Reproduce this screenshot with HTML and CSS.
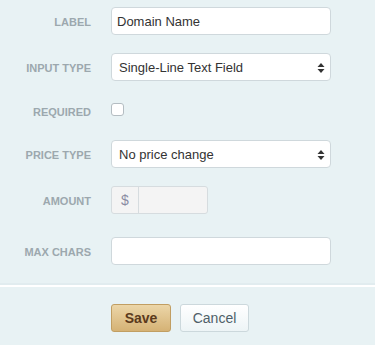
FILE: index.html
```html
<!DOCTYPE html>
<html>
<head>
<meta charset="utf-8">
<link rel="stylesheet" href="styles.css">
</head>
<body>
<div class="form">
  <div class="fields">
    <div class="row">
      <div class="label">LABEL</div>
      <div class="control"><div class="input">Domain Name</div></div>
    </div>
    <div class="row">
      <div class="label">INPUT TYPE</div>
      <div class="control"><div class="input select">Single-Line Text Field<svg class="arrows" width="8" height="12" viewBox="0 0 8 12"><path d="M4 1 L7.5 5 H0.5 Z M4 11 L7.5 7 H0.5 Z" fill="#333"/></svg></div></div>
    </div>
    <div class="row row-check">
      <div class="label">REQUIRED</div>
      <div class="control"><div class="checkbox"></div></div>
    </div>
    <div class="row">
      <div class="label">PRICE TYPE</div>
      <div class="control"><div class="input select">No price change<svg class="arrows" width="8" height="12" viewBox="0 0 8 12"><path d="M4 1 L7.5 5 H0.5 Z M4 11 L7.5 7 H0.5 Z" fill="#333"/></svg></div></div>
    </div>
    <div class="row row-amount">
      <div class="label">AMOUNT</div>
      <div class="control"><div class="amount"><span class="addon">$</span><span class="amount-field"></span></div></div>
    </div>
    <div class="row">
      <div class="label">MAX CHARS</div>
      <div class="control"><div class="input"></div></div>
    </div>
  </div>
  <div class="footer">
    <button class="btn btn-save">Save</button>
    <button class="btn btn-cancel">Cancel</button>
  </div>
</div>
</body>
</html>
```
FILE: styles.css
```css
html, body {
  margin: 0;
  padding: 0;
  background: #e8f2f4;
  font-family: "Liberation Sans", Arial, sans-serif;
}
.form {
  width: 375px;
}
.fields {
  padding-top: 7px;
  padding-bottom: 18px;
  border-bottom: 2px solid #e1ecef;
}
.row {
  display: flex;
  align-items: center;
  height: 28px;
  margin-bottom: 18px;
}
.row:last-child {
  margin-bottom: 0;
}
.row-check {
  height: 24px;
  margin-bottom: 17px;
}
.row-amount {
  margin-bottom: 23px;
}
.label {
  width: 91px;
  text-align: right;
  font-size: 11px;
  font-weight: bold;
  color: #9ca8ae;
  padding-right: 20px;
  box-sizing: content-box;
  padding-top: 1px;
}
.control {
  flex: 0 0 auto;
}
.input {
  box-sizing: border-box;
  width: 220px;
  height: 28px;
  background: #fff;
  border: 1px solid #cfd8dc;
  border-radius: 4px;
  font-size: 13px;
  color: #333;
  padding: 0 5px;
  display: flex;
  align-items: center;
  position: relative;
}
.select {
  padding-left: 7px;
}
.arrows {
  position: absolute;
  right: 5px;
  top: 8px;
}
.checkbox {
  width: 11px;
  height: 11px;
  border: 1px solid #b4bdc2;
  border-radius: 3px;
  background: #fff;
  margin-top: -3px;
}
.amount {
  display: flex;
  width: 97px;
  height: 28px;
  box-sizing: border-box;
  border: 1px solid #d6dcdf;
  border-radius: 3px;
  background: #f4f4f4;
  overflow: hidden;
}
.addon {
  width: 26px;
  border-right: 1px solid #d6dcdf;
  display: flex;
  align-items: center;
  justify-content: center;
  font-size: 14px;
  color: #8b8ca3;
}
.amount-field {
  flex: 1;
}
.footer {
  border-top: 2px solid #ffffff;
  padding-top: 17px;
  padding-left: 111px;
  display: flex;
  gap: 9px;
}
.btn {
  height: 28px;
  box-sizing: border-box;
  border-radius: 3px;
  font-family: "Liberation Sans", Arial, sans-serif;
  font-size: 14px;
  padding: 0;
  cursor: pointer;
}
.btn-save {
  width: 60px;
  background: linear-gradient(#ecd6a8, #d5b275);
  border: 1px solid #c19e62;
  color: #5b3a1c;
  font-weight: bold;
}
.btn-cancel {
  width: 69px;
  background: linear-gradient(#ffffff, #edf4f6);
  border: 1px solid #ccd8dc;
  color: #4f5f69;
}
```
